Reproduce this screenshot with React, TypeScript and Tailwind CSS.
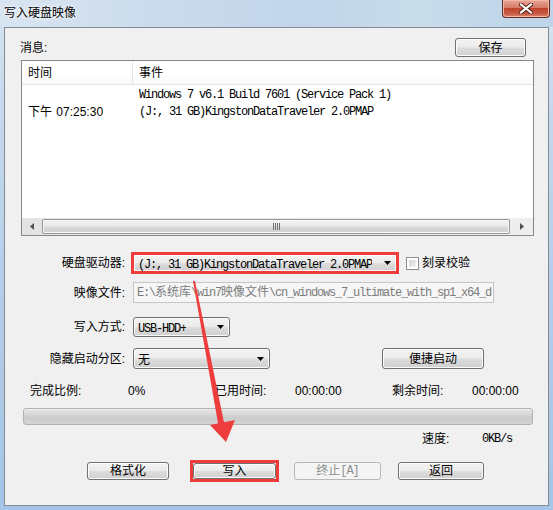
import React from "react";

const MONO = "font-[family-name:Liberation_Mono,Noto_Sans_CJK_SC,monospace] text-[12px] tracking-[-1.2px]";

function DownArrow() {
  return (
    <svg width="7" height="4" viewBox="0 0 7 4" className="shrink-0">
      <path d="M0 0H7L3.5 4Z" fill="#000" />
    </svg>
  );
}

function Btn({
  className = "",
  children,
  disabled = false,
}: {
  className?: string;
  children: React.ReactNode;
  disabled?: boolean;
}) {
  return (
    <div
      className={`flex items-center justify-center rounded-[3px] border text-[12px] leading-none ${
        disabled
          ? "border-[#b5b9bc] bg-[#f4f4f4] text-[#8f8f8f]"
          : "border-[#707070] bg-[linear-gradient(#f3f3f3_0%,#ebebeb_48%,#dddddd_52%,#cfcfcf_100%)] text-black shadow-[inset_0_0_0_1px_#fbfbfb]"
      } ${className}`}
    >
      {children}
    </div>
  );
}

function Combo({ className = "", children }: { className?: string; children: React.ReactNode }) {
  return (
    <div
      className={`flex items-center justify-between pl-[4px] pr-[5px] rounded-[3px] border border-[#707070] bg-[linear-gradient(#f3f3f3_0%,#ebebeb_48%,#dddddd_52%,#cfcfcf_100%)] shadow-[inset_0_0_0_1px_#fbfbfb] ${className}`}
    >
      <div className="overflow-hidden whitespace-nowrap">{children}</div>
      <DownArrow />
    </div>
  );
}

function Label({ children }: { children: React.ReactNode }) {
  return <div className="w-[120px] shrink-0 text-right text-[12px] leading-none text-black">{children}</div>;
}

export default function App() {
  return (
    <div className="relative w-[553px] h-[510px] overflow-hidden bg-[linear-gradient(180deg,#d8e5f2_0%,#c6d9ed_20%,#b3cde9_60%,#a6c4e6_100%)] font-[family-name:Liberation_Sans,Noto_Sans_CJK_SC,sans-serif] text-black">
      {/* Title bar */}
      <div className="relative h-[27px] bg-[linear-gradient(90deg,#d7e4f1_0%,#cbdbec_30%,#c2d5ea_55%,#c9dcea_75%,#bdd4ea_100%)]">
        <span className="absolute left-[4px] top-[5px] text-[12px] leading-[16px] text-black [text-shadow:0_0_6px_#ffffff,0_0_3px_#ffffff]">
          写入硬盘映像
        </span>
        <div className="absolute right-[3px] top-0 flex h-[18px] w-[48px] items-center justify-center rounded-b-[4px] border border-t-0 border-[#6b2a22] bg-[linear-gradient(#e9a898_0%,#d67a66_45%,#c2432c_50%,#c85a43_80%,#dc8a6e_100%)] shadow-[inset_0_0_0_1px_#f0b8a8]">
          <svg width="14" height="11" viewBox="0 0 14 11">
            <path d="M2 1.5L12 9.5M12 1.5L2 9.5" stroke="#4a1a12" strokeWidth="4" strokeLinecap="square" />
            <path d="M2 1.5L12 9.5M12 1.5L2 9.5" stroke="#ffffff" strokeWidth="2.2" strokeLinecap="square" />
          </svg>
        </div>
      </div>

      {/* Client area */}
      <div className="mx-[4px] flex h-[479px] flex-col border border-[#828c97] bg-[#f0f0f0]">
        {/* Message header */}
        <div className="mt-[10px] flex items-center">
          <span className="ml-[15px] text-[12px] leading-none">消息:</span>
          <Btn className="ml-auto mr-[22px] h-[19px] w-[71px]">保存</Btn>
        </div>

        {/* List view */}
        <div className="ml-[16px] mt-[3px] flex h-[176px] w-[513px] flex-col border border-[#828790] bg-white">
          <div className="flex h-[24px] shrink-0 items-center border-b border-[#e5e5e5] bg-[linear-gradient(#ffffff_0%,#ffffff_60%,#f7f8f9_100%)] text-[12px]">
            <div className="w-[110px] pl-[6px] leading-none">时间</div>
            <div className="flex h-full items-center border-l border-[#e5e5e5] pl-[6px] leading-none">事件</div>
          </div>
          <div className="flex-1 pt-[1px]">
            <div className="flex h-[17px] items-center">
              <div className="w-[110px]" />
              <div className={`pl-[7px] ${MONO} whitespace-nowrap`}>Windows 7 v6.1 Build 7601 (Service Pack 1)</div>
            </div>
            <div className="flex h-[17px] items-center">
              <div className="w-[110px] pl-[6px] text-[12px] leading-none whitespace-nowrap">
                下午 <span className="ml-[1px]">07:25:30</span>
              </div>
              <div className={`pl-[7px] ${MONO} whitespace-nowrap`}>(J:, 31 GB)KingstonDataTraveler 2.0PMAP</div>
            </div>
          </div>
          {/* Horizontal scrollbar */}
          <div className="flex h-[17px] shrink-0 items-center bg-[linear-gradient(90deg,#e3e3e3,#eeeeee)]">
            <div className="flex h-full w-[20px] items-center justify-center">
              <svg width="4" height="7" viewBox="0 0 4 7">
                <path d="M4 0V7L0 3.5Z" fill="#505050" />
              </svg>
            </div>
            <div className="flex h-[15px] w-[468px] items-center justify-center rounded-[2px] border border-[#979797] bg-[linear-gradient(#f2f2f2_0%,#ebebeb_45%,#d9d9d9_55%,#d0d0d0_100%)] shadow-[inset_0_0_0_1px_#f8f8f8]">
              <svg width="7" height="7" viewBox="0 0 7 7">
                <path d="M0.5 0V7M2.5 0V7M4.5 0V7M6.5 0V7" stroke="#6e6e6e" strokeWidth="1" />
              </svg>
            </div>
            <div className="flex h-full flex-1 items-center justify-center">
              <svg width="4" height="7" viewBox="0 0 4 7">
                <path d="M0 0V7L4 3.5Z" fill="#505050" />
              </svg>
            </div>
          </div>
        </div>

        {/* Drive row */}
        <div className="mt-[16px] flex h-[22px] items-center">
          <Label>硬盘驱动器:</Label>
          <div className="ml-[6px] h-[22px] w-[268px] border-[3px] border-[#ee3b3b]">
            <Combo className="h-full w-full rounded-none border-0 pl-[4px] pr-[3px]">
              <span className={MONO}>(J:, 31 GB)KingstonDataTraveler 2.0PMAP</span>
            </Combo>
          </div>
          <div className="ml-[7px] h-[13px] w-[13px] border border-[#8e8f8f] bg-white p-[2px]">
            <div className="h-full w-full bg-[linear-gradient(135deg,#d4d4d4,#f4f4f4)]" />
          </div>
          <span className="ml-[3px] text-[12px] leading-none">刻录校验</span>
        </div>

        {/* Image file row */}
        <div className="mt-[8px] flex h-[21px] items-center">
          <Label>映像文件:</Label>
          <div className="ml-[8px] flex h-[21px] w-[361px] items-center overflow-hidden whitespace-nowrap border border-[#c6c6c6] bg-[#f6f6f6] pl-[3px] text-[#7c7c7c]">
            <span className={MONO}>
              E:\<span className="tracking-normal">系统库</span>\win7<span className="tracking-normal">映像文件</span>\cn_windows_7_ultimate_with_sp1_x64_d
            </span>
          </div>
        </div>

        {/* Write mode row */}
        <div className="mt-[14px] flex h-[20px] items-center">
          <Label>写入方式:</Label>
          <Combo className="ml-[8px] h-[20px] w-[97px]">
            <span className={MONO}>USB-HDD+</span>
          </Combo>
        </div>

        {/* Hidden partition row */}
        <div className="mt-[11px] flex h-[21px] items-center">
          <Label>隐藏启动分区:</Label>
          <Combo className="ml-[8px] h-[21px] w-[137px]">
            <span className="text-[12px] leading-none">无</span>
          </Combo>
          <Btn className="ml-[112px] h-[21px] w-[102px]">便捷启动</Btn>
        </div>

        {/* Progress labels */}
        <div className="mt-[14px] flex h-[16px] items-center whitespace-nowrap pl-[25px] text-[12px] leading-none">
          <span className="w-[98px]">完成比例:</span>
          <span className="w-[87px]">0%</span>
          <span className="w-[80px]">已用时间:</span>
          <span className="w-[97px]">00:00:00</span>
          <span className="w-[80px]">剩余时间:</span>
          <span>00:00:00</span>
        </div>

        {/* Progress bar */}
        <div className="ml-[18px] mt-[9px] h-[17px] w-[510px] rounded-[3px] border border-[#b2b2b2] bg-[linear-gradient(#e4e4e4_0%,#dadada_30%,#cbcbcb_60%,#d3d3d3_100%)] shadow-[inset_0_1px_0_#eeeeee]" />

        {/* Speed */}
        <div className="mt-[7px] flex h-[14px] items-center whitespace-nowrap">
          <span className="ml-[417px] w-[60px] text-[12px] leading-none">速度:</span>
          <span className={MONO}>0KB/s</span>
        </div>

        {/* Bottom buttons */}
        <div className="mt-[14px] flex h-[22px] items-center">
          <Btn className="ml-[82px] h-[18px] w-[82px]">格式化</Btn>
          <div className="ml-[21px] h-[22px] w-[89px] border-[3px] border-[#ee3b3b]">
            <Btn className="h-full w-full">写入</Btn>
          </div>
          <Btn disabled className="ml-[15px] h-[18px] w-[87px]">
            终止<span className="font-[family-name:Liberation_Mono,monospace] text-[12px] tracking-[-1px]">[A]</span>
          </Btn>
          <Btn className="ml-[17px] h-[18px] w-[86px]">返回</Btn>
        </div>
      </div>

      {/* Red annotation arrow */}
      <svg className="pointer-events-none absolute left-0 top-0" width="553" height="510" viewBox="0 0 553 510">
        <polygon points="193,281 195,281 224.5,425 218.5,426" fill="#ef3d3d" />
        <polygon points="210,425 235,420 226,442" fill="#ef3d3d" />
      </svg>
    </div>
  );
}
